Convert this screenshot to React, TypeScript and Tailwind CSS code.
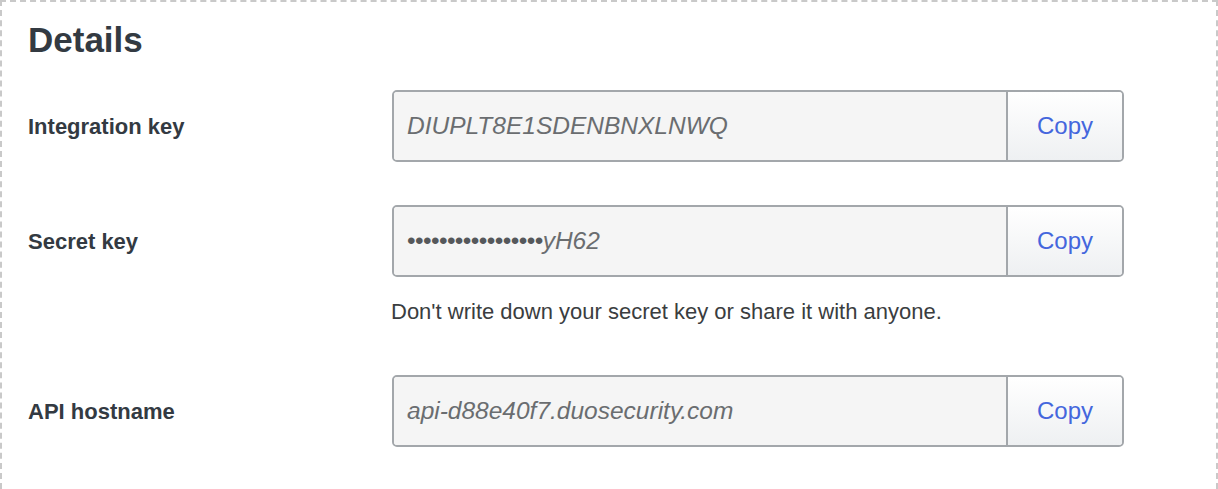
const rows = [
  { label: "Integration key", value: "DIUPLT8E1SDENBNXLNWQ" },
  { label: "Secret key", value: "yH62", secret: true, help: "Don't write down your secret key or share it with anyone." },
  { label: "API hostname", value: "api-d88e40f7.duosecurity.com" },
];

function KeyField({ value, secret }: { value: string; secret?: boolean }) {
  return (
    <div className="flex w-[732px] h-[72px] rounded-[5px] border-2 border-[#a3a7ab] overflow-hidden">
      <div className="flex-1 flex items-center bg-[#f5f5f5] pl-[13px] text-[24.5px] italic text-[#6a6d70]">
        {secret && <span className="not-italic text-[#55585b] tracking-[-0.6px]">{"•".repeat(17)}</span>}
        {value}
      </div>
      <button className="w-[116px] border-l-2 border-[#a3a7ab] bg-gradient-to-b from-white to-[#eef0f2] text-[24px] text-[#4466dd]">
        Copy
      </button>
    </div>
  );
}

export default function App() {
  return (
    <div className="min-h-[489px] border-2 border-b-0 border-dashed border-[#c9c9c9] pl-[26px] pt-[18px] font-['Liberation_Sans',Arial,sans-serif] text-[#333a42]">
      <h2 className="text-[35px] leading-[40px] font-bold mb-[30px]">Details</h2>

      {rows.map((r, i) => (
        <div key={r.label} className={i === 0 ? "" : i === 1 ? "mt-[43px]" : "mt-[49px]"}>
          <div className="flex items-center">
            <div className="w-[364px] text-[22px] font-bold">{r.label}</div>
            <KeyField value={r.value} secret={r.secret} />
          </div>
          {r.help && (
            <p className="ml-[363px] mt-[21px] text-[22px] leading-[28px] text-[#3a3d40]">{r.help}</p>
          )}
        </div>
      ))}
    </div>
  );
}
